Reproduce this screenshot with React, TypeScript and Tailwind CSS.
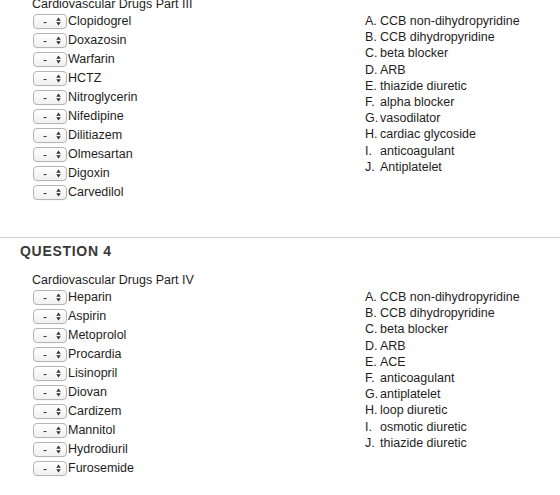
import React from 'react';

type Question = {
  number?: number;
  title: string;
  drugs: string[];
  options: string[];
};

const questions: Question[] = [
  {
    title: 'Cardiovascular Drugs Part III',
    drugs: [
      'Clopidogrel',
      'Doxazosin',
      'Warfarin',
      'HCTZ',
      'Nitroglycerin',
      'Nifedipine',
      'Dilitiazem',
      'Olmesartan',
      'Digoxin',
      'Carvedilol',
    ],
    options: [
      'CCB non-dihydropyridine',
      'CCB dihydropyridine',
      'beta blocker',
      'ARB',
      'thiazide diuretic',
      'alpha blocker',
      'vasodilator',
      'cardiac glycoside',
      'anticoagulant',
      'Antiplatelet',
    ],
  },
  {
    number: 4,
    title: 'Cardiovascular Drugs Part IV',
    drugs: [
      'Heparin',
      'Aspirin',
      'Metoprolol',
      'Procardia',
      'Lisinopril',
      'Diovan',
      'Cardizem',
      'Mannitol',
      'Hydrodiuril',
      'Furosemide',
    ],
    options: [
      'CCB non-dihydropyridine',
      'CCB dihydropyridine',
      'beta blocker',
      'ARB',
      'ACE',
      'anticoagulant',
      'antiplatelet',
      'loop diuretic',
      'osmotic diuretic',
      'thiazide diuretic',
    ],
  },
];

const letters = 'ABCDEFGHIJ'.split('');

// little mac-style popup with a "-" placeholder and up/down chevrons
function MatchSelect() {
  return (
    <div className="flex h-[15px] w-[34px] shrink-0 items-center rounded-[4px] border border-[#b4b4b4] bg-gradient-to-b from-white to-[#f0f0f0] shadow-[0_0.5px_0.5px_rgba(0,0,0,0.06)]">
      <span className="ml-[9px] text-[12px] leading-none text-[#333]">-</span>
      <svg className="ml-auto mr-[5px]" width="5" height="9" viewBox="0 0 5 9">
        <path d="M2.5 0.5 L4.8 3.8 H0.2 Z" fill="#333" />
        <path d="M2.5 8.5 L4.8 5.2 H0.2 Z" fill="#333" />
      </svg>
    </div>
  );
}

function QuestionBlock({ q }: { q: Question }) {
  return (
    <div className="pl-[32px]">
      <p className="leading-[15px]">{q.title}</p>
      <div className="flex">
        <ul className="w-[333px] shrink-0">
          {q.drugs.map((d) => (
            <li key={d} className="flex h-[19px] items-center pl-[1px]">
              <MatchSelect />
              <span className="ml-[1px] leading-[19px]">{d}</span>
            </li>
          ))}
        </ul>
        <ul className="mt-[1px] leading-[16.2px]">
          {q.options.map((o, i) => (
            <li key={o} className="flex">
              <span className="w-[15px] shrink-0">{letters[i]}.</span>
              <span>{o}</span>
            </li>
          ))}
        </ul>
      </div>
    </div>
  );
}

export default function App() {
  return (
    <div className="h-[495px] w-[560px] overflow-hidden bg-white font-['Liberation_Sans',Arial,sans-serif] text-[12.5px] text-[#1e1e1e]">
      <div className="-mt-[3px]">
        <QuestionBlock q={questions[0]} />
      </div>

      <div className="mt-[35px] h-px w-full bg-[#d3d3d3]" />

      <h2 className="mt-[3px] pl-[20px] text-[14px] font-bold leading-[20px] tracking-[0.7px] text-[#383838]">
        QUESTION {questions[1].number}
      </h2>

      <div className="mt-[12px]">
        <QuestionBlock q={questions[1]} />
      </div>
    </div>
  );
}
